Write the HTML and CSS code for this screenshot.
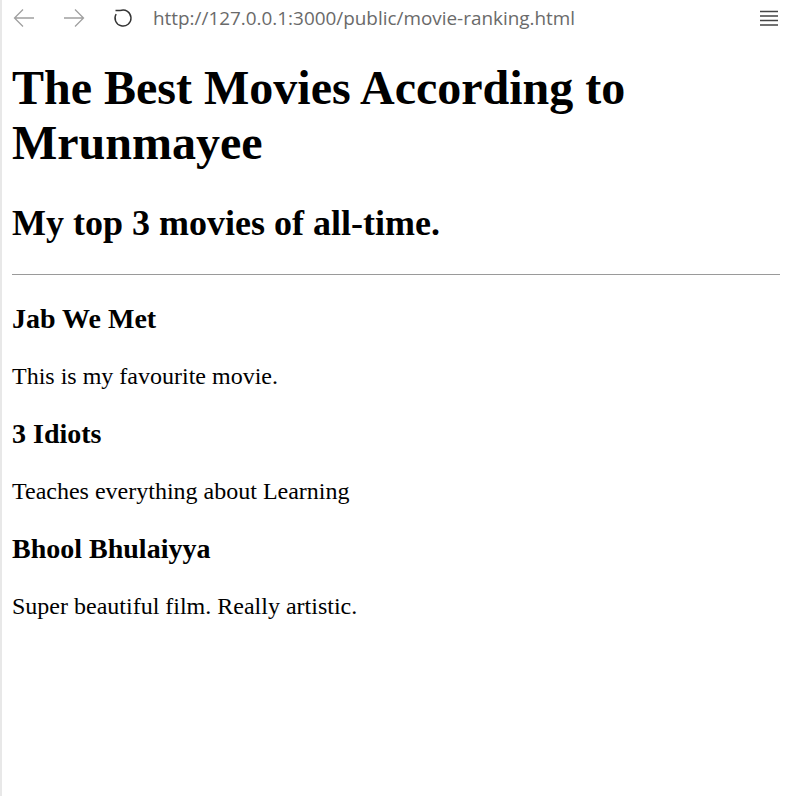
FILE: index.html
```html
<!DOCTYPE html>
<html lang="en">
<head>
<meta charset="utf-8">
<title>Movie Ranking</title>
<link rel="stylesheet" href="styles.css">
</head>
<body>
<div class="frame">
  <div class="toolbar">
    <svg class="icon back" width="22" height="20" viewBox="0 0 22 20"><path d="M21 10H1.5M10 1.5L1.5 10L10 18.5" fill="none" stroke="#a0a0a0" stroke-width="1.3"/></svg>
    <svg class="icon fwd" width="22" height="20" viewBox="0 0 22 20"><path d="M1 10H20.5M12 1.5L20.5 10L12 18.5" fill="none" stroke="#a0a0a0" stroke-width="1.3"/></svg>
    <svg class="icon reload" width="20" height="22" viewBox="0 0 20 22"><path d="M7.3 3.5A8 8 0 1 1 3.1 7M7.3 3.5H2.5" fill="none" stroke="#333" stroke-width="1.4"/></svg>
    <span class="url">http://127.0.0.1:3000/public/movie-ranking.html</span>
    <svg class="icon menu" width="18" height="16" viewBox="0 0 18 16"><path d="M0 1.5H18M0 6H18M0 10.5H18M0 15H18" fill="none" stroke="#444" stroke-width="1.4"/></svg>
  </div>
  <div class="page">
    <h1>The Best Movies According to Mrunmayee</h1>
    <h2>My top 3 movies of all-time.</h2>
    <hr>
    <h3>Jab We Met</h3>
    <p>This is my favourite movie.</p>
    <h3>3 Idiots</h3>
    <p>Teaches everything about Learning</p>
    <h3>Bhool Bhulaiyya</h3>
    <p>Super beautiful film. Really artistic.</p>
  </div>
</div>
</body>
</html>
```
FILE: styles.css
```css
html, body {
  margin: 0;
  padding: 0;
  background: #fff;
}
.frame {
  min-height: 796px;
  border-left: 2px solid #e8e8e8;
  display: flex;
  flex-direction: column;
}
.toolbar {
  height: 38px;
  display: flex;
  align-items: center;
  padding: 0 9px 0 11px;
}
.icon { flex: none; }
.back { margin-top: -3px; }
.fwd { margin-left: 28px; margin-top: -3px; }
.reload { margin-left: 28px; margin-top: -3px; }
.url {
  margin-left: 20px;
  font-family: "Open Sans", "Noto Sans", sans-serif;
  font-size: 18.9px;
  color: #6a6a6a;
  flex: 1;
  margin-top: -3px;
}
.menu { margin-top: -3px; }
.page {
  padding: 0 7px 0 10px;
  font-family: "Liberation Serif", "Times New Roman", serif;
  font-size: 24px;
  color: #000;
}
h1 {
  font-size: 48px;
  margin: 22px 0 32px;
}
h2 {
  font-size: 36px;
  margin: 30px 0;
}
hr {
  margin: 12px 0;
  border: none;
  border-top: 1.5px solid #9a9a9a;
  height: 0;
}
h3 {
  font-size: 28px;
  margin: 28px 0;
}
p {
  margin: 24px 0;
}
```
